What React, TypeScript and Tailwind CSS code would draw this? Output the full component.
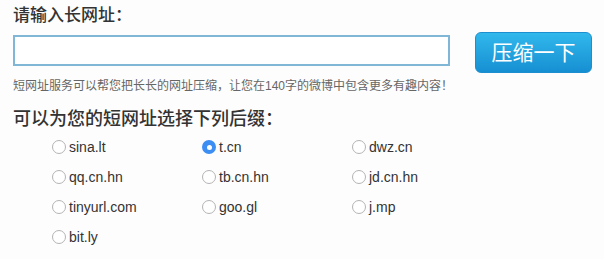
import { useState } from "react";

const SUFFIXES = ["sina.lt", "t.cn", "dwz.cn", "qq.cn.hn", "tb.cn.hn", "jd.cn.hn", "tinyurl.com", "goo.gl", "j.mp", "bit.ly"];

const CJK = "font-['Helvetica','Liberation_Sans','Noto_Sans_CJK_SC',sans-serif]";

function Radio({ label, checked, onSelect }: { label: string; checked: boolean; onSelect: () => void }) {
  return (
    <label className="flex h-[30px] cursor-pointer items-center gap-[3px]" onClick={onSelect}>
      {checked ? (
        <span className="flex h-[14px] w-[14px] items-center justify-center rounded-full bg-[#3c8ef3]">
          <span className="h-[5px] w-[5px] rounded-full bg-white" />
        </span>
      ) : (
        <span className="h-[14px] w-[14px] rounded-full border border-[#b4b4b4] bg-white" />
      )}
      <span className="text-[14px] text-[#333]">{label}</span>
    </label>
  );
}

export default function App() {
  const [url, setUrl] = useState("");
  const [suffix, setSuffix] = useState("t.cn");

  return (
    <div className={`h-[259px] w-[604px] bg-[#fdfdfd] pl-[13px] pt-[4px] ${CJK}`}>
      <h2 className="text-[17px] font-medium leading-[24px] text-[#333]">请输入长网址：</h2>

      <div className="mt-[4px] flex items-start gap-[25px]">
        <input
          value={url}
          onChange={(e) => setUrl(e.target.value)}
          className="mt-[3px] h-[31px] w-[437px] border-2 border-[#80b6d6] bg-white px-2 text-[14px] outline-none"
        />
        <button className="h-[41px] w-[117px] rounded-[6px] border border-[#1b8fcf] bg-gradient-to-b from-[#31b8ec] to-[#168fd2] text-[21px] text-white">
          压缩一下
        </button>
      </div>

      <p className="mt-[4px] text-[12px] leading-[18px] text-[#666]">
        短网址服务可以帮您把长长的网址压缩，让您在140字的微博中包含更多有趣内容！
      </p>

      <h2 className="mt-[12px] text-[18px] font-medium leading-[24px] text-[#333]">可以为您的短网址选择下列后缀：</h2>

      <div className="mt-[1px] grid grid-cols-[150px_150px_150px] pl-[39px]">
        {SUFFIXES.map((s) => (
          <Radio key={s} label={s} checked={suffix === s} onSelect={() => setSuffix(s)} />
        ))}
      </div>
    </div>
  );
}
